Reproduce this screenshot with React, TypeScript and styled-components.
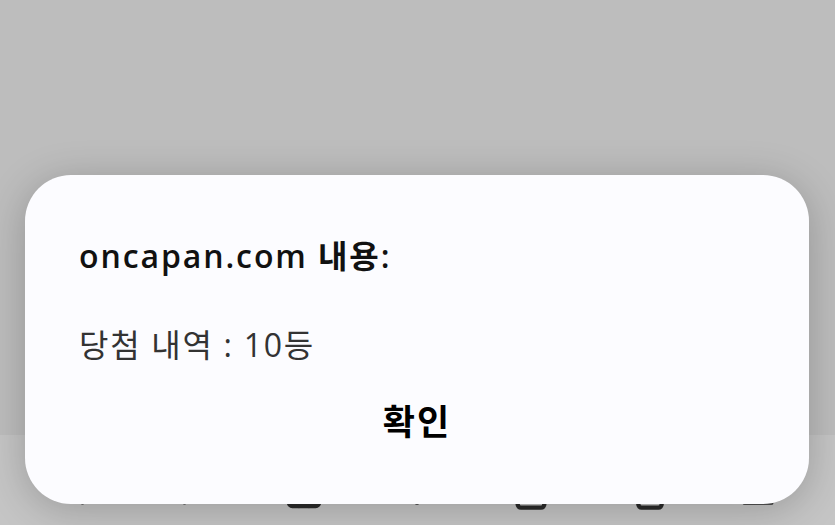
import React from 'react';
import styled, { createGlobalStyle } from 'styled-components';
import { ChevronLeft, ChevronRight, Home, Plus, Share, Copy, Menu } from 'lucide-react';

const GlobalStyle = createGlobalStyle`
  html, body {
    margin: 0;
    padding: 0;
    background: #bebebe;
  }
  * {
    box-sizing: border-box;
  }
`;

const App = () => {
  return (
    <Page>
      <GlobalStyle />
      <Dimmed />
      <NavBar>
        <NavIcon><ChevronLeft size={44} strokeWidth={2.6} /></NavIcon>
        <NavIcon><ChevronRight size={44} strokeWidth={2.6} /></NavIcon>
        <NavIcon><Home size={40} strokeWidth={2.6} /></NavIcon>
        <NavIcon><Plus size={40} strokeWidth={2.6} /></NavIcon>
        <NavIcon><Share size={40} strokeWidth={2.6} /></NavIcon>
        <NavIcon><Copy size={40} strokeWidth={2.6} /></NavIcon>
        <NavIcon><Menu size={40} strokeWidth={2.6} /></NavIcon>
      </NavBar>
      <Dialog>
        <Title>oncapan.com 내용:</Title>
        <Message>당첨 내역 : 10등</Message>
        <Actions>
          <ConfirmButton>확인</ConfirmButton>
        </Actions>
      </Dialog>
    </Page>
  );
};

export default App;

const Page = styled.div`
  position: relative;
  width: 835px;
  height: 525px;
  display: flex;
  flex-direction: column;
  overflow: hidden;
  font-family: 'Open Sans', 'Noto Sans CJK KR', sans-serif;
`;

const Dimmed = styled.div`
  flex: 1;
  background: #bdbdbd;
`;

const NavBar = styled.div`
  height: 90px;
  background: #c5c5c5;
  display: flex;
  align-items: flex-start;
  justify-content: space-around;
  padding: 34px 20px 0;
  color: #2a2a2a;
`;

const NavIcon = styled.div`
  display: flex;
  align-items: center;
  justify-content: center;
  width: 60px;
  height: 44px;
`;

const Dialog = styled.div`
  position: absolute;
  left: 25px;
  top: 175px;
  width: 784px;
  height: 329px;
  border-radius: 46px;
  background: #fcfcff;
  box-shadow: 0 6px 40px rgba(0, 0, 0, 0.22);
  display: flex;
  flex-direction: column;
  padding: 60px 54px 0;
`;

const Title = styled.h2`
  margin: 0;
  font-size: 32px;
  font-weight: 600;
  color: #111;
  line-height: 42px;
  letter-spacing: 1.9px;
`;

const Message = styled.p`
  margin: 47px 0 0;
  font-size: 32px;
  font-weight: 400;
  color: #333;
  line-height: 42px;
  letter-spacing: 1.7px;
`;

const Actions = styled.div`
  display: flex;
  justify-content: center;
  margin-top: 35px;
`;

const ConfirmButton = styled.button`
  border: none;
  background: none;
  padding: 0;
  font-family: 'Open Sans', 'Noto Sans CJK KR', sans-serif;
  font-size: 35px;
  font-weight: 700;
  color: #000;
  line-height: 42px;
  letter-spacing: 2px;
`;
